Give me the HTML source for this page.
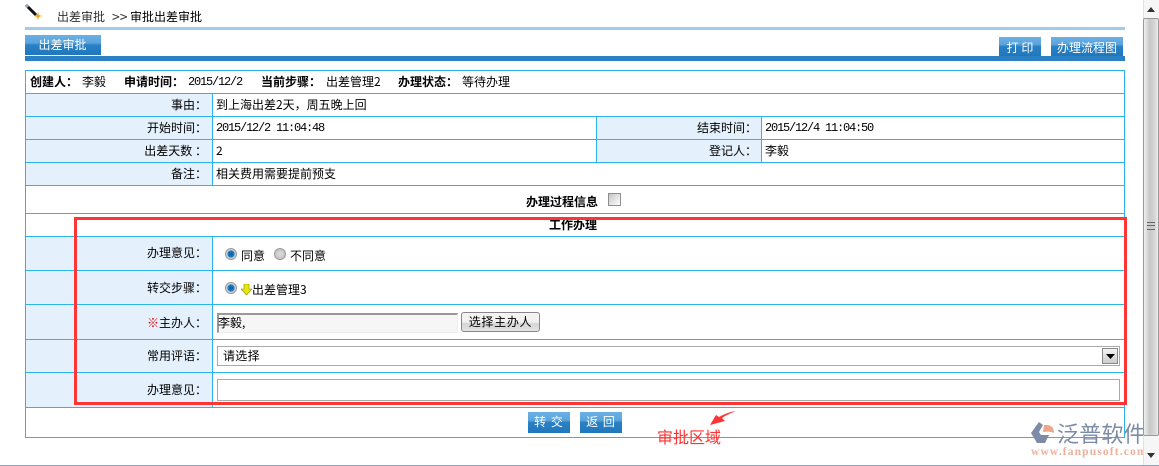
<!DOCTYPE html>
<html><head><meta charset="utf-8"><style>
html,body{margin:0;padding:0;width:1159px;height:466px;overflow:hidden;background:#fff}
div,span{position:absolute;box-sizing:border-box}
.t{white-space:nowrap;font:12px/14px "WenQuanYi Zen Hei","Noto Sans CJK SC",sans-serif;color:#000}
.t.m{font:12px/14px "Liberation Mono",monospace;letter-spacing:-1.2px}
.b{font-weight:bold}
.r{text-align:right;left:30px;width:177px}
.h{left:25px;width:1100px;height:1px;background:#2db4e8}
.v{width:1px;background:#2db4e8}
.f{background:#e4f1fd}
.btn{background:linear-gradient(#6cb0e4 0,#5aa4dc 40%,#2a80c4 50%,#2078bc 100%);color:#fff;text-align:center;font:12px/20px "WenQuanYi Zen Hei","Noto Sans CJK SC",sans-serif;white-space:nowrap}
.rd{background:#ff3535}
.radio{width:12px;height:12px;border-radius:50%;border:1px solid #9a9a9a;background:radial-gradient(circle,#0a5fa8 0,#1c7cc0 45%,#c4ccd4 55%,#eee 100%)}
.in{border:1px solid #aaa;background:#fff}
</style></head><body>
<svg style="position:absolute;left:24px;top:3px" width="20" height="18" viewBox="0 0 20 18"><path d="M2 2L12 12" stroke="#111" stroke-width="3"/><path d="M2 2L4 4" stroke="#9ab" stroke-width="3"/><path d="M14 9l1 3 3 1-3 1-1 3-1-3-3-1 3-1z" fill="#f5a020"/></svg>
<span class="t" style="left:57px;top:10px;color:#333">出差审批</span>
<span class="t" style="left:112px;top:10px;color:#333;font-size:14px">&gt;&gt;</span>
<span class="t" style="left:130px;top:10px">审批出差审批</span>
<div style="left:25px;top:27px;width:1100px;height:3px;background:#9fcbef"></div>
<div class="btn" style="left:25px;top:35px;width:76px;height:20px;padding-right:1px">出差审批</div>
<div style="left:25px;top:56px;width:1100px;height:5px;background:#2a80c2"></div>
<div class="btn" style="left:999px;top:37px;width:42px;height:19px;line-height:21px">打&nbsp;印</div>
<div class="btn" style="left:1051px;top:37px;width:72px;height:19px;line-height:21px">办理流程图</div>

<div class="f" style="left:26px;top:94px;width:186px;height:91px"></div>
<div class="f" style="left:597px;top:117px;width:164px;height:45px"></div>
<div class="f" style="left:26px;top:237px;width:186px;height:170px"></div>

<div class="h" style="top:70px"></div><div class="h" style="top:93px"></div><div class="h" style="top:116px"></div><div class="h" style="top:139px"></div><div class="h" style="top:162px"></div><div class="h" style="top:185px"></div><div class="h" style="top:213px"></div><div class="h" style="top:236px"></div><div class="h" style="top:270px"></div><div class="h" style="top:304px"></div><div class="h" style="top:339px"></div><div class="h" style="top:372px"></div><div class="h" style="top:407px"></div><div class="h" style="top:437px;background:#45aadd"></div>
<div class="v" style="left:25px;top:70px;height:368px"></div>
<div class="v" style="left:1124px;top:70px;height:368px"></div>
<div class="v" style="left:212px;top:93px;height:92px"></div>
<div class="v" style="left:212px;top:236px;height:171px"></div>
<div class="v" style="left:596px;top:116px;height:46px"></div>
<div class="v" style="left:761px;top:116px;height:46px"></div>

<span class="t b" style="left:30px;top:75px">创建人：</span><span class="t" style="left:82px;top:75px">李毅</span>
<span class="t b" style="left:124px;top:75px">申请时间：</span><span class="t m" style="left:188px;top:75px">2015/12/2</span>
<span class="t b" style="left:261px;top:75px">当前步骤：</span><span class="t" style="left:326px;top:75px">出差管理2</span>
<span class="t b" style="left:398px;top:75px">办理状态：</span><span class="t" style="left:462px;top:75px">等待办理</span>

<span class="t r" style="top:98px">事由：</span><span class="t" style="left:216px;top:98px">到上海出差2天，周五晚上回</span>
<span class="t r" style="top:121px">开始时间：</span><span class="t m" style="left:216px;top:121px">2015/12/2 11:04:48</span>
<span class="t" style="left:697px;top:121px">结束时间：</span><span class="t m" style="left:765px;top:121px">2015/12/4 11:04:50</span>
<span class="t r" style="top:144px">出差天数 ：</span><span class="t" style="left:216px;top:144px">2</span>
<span class="t" style="left:709px;top:144px">登记人：</span><span class="t" style="left:765px;top:144px">李毅</span>
<span class="t r" style="top:167px">备注：</span><span class="t" style="left:216px;top:167px">相关费用需要提前预支</span>

<span class="t b" style="left:526px;top:195px">办理过程信息</span>
<div style="left:608px;top:193px;width:13px;height:13px;border:1px solid #8e8e8e;background:linear-gradient(135deg,#c4c4c4,#fff)"></div>
<span class="t b" style="left:549px;top:218px">工作办理</span>

<span class="t r" style="top:246px">办理意见：</span>
<div class="radio" style="left:225px;top:248px"></div><span class="t" style="left:241px;top:249px">同意</span>
<div class="radio" style="left:274px;top:248px;background:radial-gradient(circle,#ddd,#bbb)"></div><span class="t" style="left:290px;top:249px">不同意</span>
<span class="t r" style="top:281px">转交步骤：</span>
<div class="radio" style="left:225px;top:282px"></div>
<svg style="position:absolute;left:241px;top:284px" width="11" height="11" viewBox="0 0 11 11"><path d="M3 0H8V5H11L5.5 11L0 5H3Z" fill="#e8e800" stroke="#8a8a20" stroke-width=".6"/></svg>
<span class="t" style="left:252px;top:283px">出差管理3</span>
<span class="t r" style="top:316px"><span style="position:static;color:#e00">※</span>主办人：</span>
<div style="left:217px;top:313px;width:241px;height:20px;background:#f6f6f6;border:1px solid #eee;border-top:2px solid #999;border-left:2px solid #999"></div>
<span class="t" style="left:218px;top:316px">李毅,</span>
<div style="left:461px;top:312px;width:79px;height:20px;border:1px solid #888;border-radius:3px;background:linear-gradient(#f4f4f4 0,#f0f0f0 50%,#d4d4d4 60%,#e4e4e4 100%);text-align:center;font:12px/18px 'WenQuanYi Zen Hei','Noto Sans CJK SC',sans-serif;white-space:nowrap;letter-spacing:.7px">选择主办人</div>
<span class="t r" style="top:349px">常用评语：</span>
<div class="in" style="left:217px;top:346px;width:903px;height:20px"></div>
<span class="t" style="left:223px;top:349px;letter-spacing:.3px">请选择</span>
<div style="left:1102px;top:348px;width:16px;height:16px;border:1px solid #888;background:linear-gradient(#f4f4f4,#ccc)"></div>
<svg style="position:absolute;left:1106px;top:354px" width="9" height="5"><path d="M0 0H9L4.5 5Z" fill="#000"/></svg>
<span class="t r" style="top:383px">办理意见：</span>
<div class="in" style="left:217px;top:379px;width:903px;height:22px"></div>

<div class="rd" style="left:74px;top:217px;width:1053px;height:3px"></div>
<div class="rd" style="left:74px;top:402px;width:1053px;height:3px"></div>
<div class="rd" style="left:74px;top:217px;width:3px;height:188px"></div>
<div class="rd" style="left:1124px;top:217px;width:3px;height:188px"></div>

<div class="btn" style="left:528px;top:412px;width:42px;height:21px;letter-spacing:1px">转&nbsp;交</div>
<div class="btn" style="left:580px;top:412px;width:42px;height:21px;letter-spacing:1px">返&nbsp;回</div>
<span class="t" style="left:657px;top:427px;font-size:16px;line-height:18px;color:#f33">审批区域</span>
<svg style="position:absolute;left:708px;top:410px" width="30" height="17" viewBox="0 0 30 17"><path d="M28 1Q18 5 14 8L17 11L2 15L8 5L11 7Q20 2 28 1Z" fill="#f33"/></svg>

<svg style="position:absolute;left:1030px;top:421px" width="26" height="24" viewBox="0 0 26 24"><path d="M9 1L1 12L7 22H15L19 14H11L9 11L13 4Z" fill="#7d8ca6"/><path d="M14 4Q24 3 24 12Q20 10 13 11Z" fill="#eba888"/></svg>
<span class="t" style="left:1057px;top:421px;font-size:22px;line-height:25px;color:#7d8ca6;letter-spacing:.2px">泛普软件</span>
<span class="t" style="left:1031px;top:446px;font:bold 11.5px/13px 'Liberation Serif',serif;color:#eeb09a;letter-spacing:1.15px">www.fanpusoft.com</span>

<div style="left:1143px;top:0;width:16px;height:465px;background:#f6f6f6;border-left:1px solid #e2e2e2"></div>
<svg style="position:absolute;left:1147px;top:7px" width="8" height="5"><path d="M0 5H8L4 0Z" fill="#333"/></svg>
<div style="left:1143px;top:18px;width:16px;height:418px;background:linear-gradient(90deg,#f0f0f0,#c8c8c8 40%,#d8d8d8 80%,#eee);border:1px solid #9a9a9a;border-radius:2px"></div>
<div style="left:1147px;top:222px;width:8px;height:8px;border-top:1px solid #666;border-bottom:1px solid #666;background:linear-gradient(#ccc 0 37%,#666 37% 50%,#ccc 50%)"></div>
<svg style="position:absolute;left:1147px;top:453px" width="8" height="5"><path d="M0 0H8L4 5Z" fill="#333"/></svg>
<div style="left:0;top:465px;width:1159px;height:1px;background:#7aa8e8"></div>
</body></html>
